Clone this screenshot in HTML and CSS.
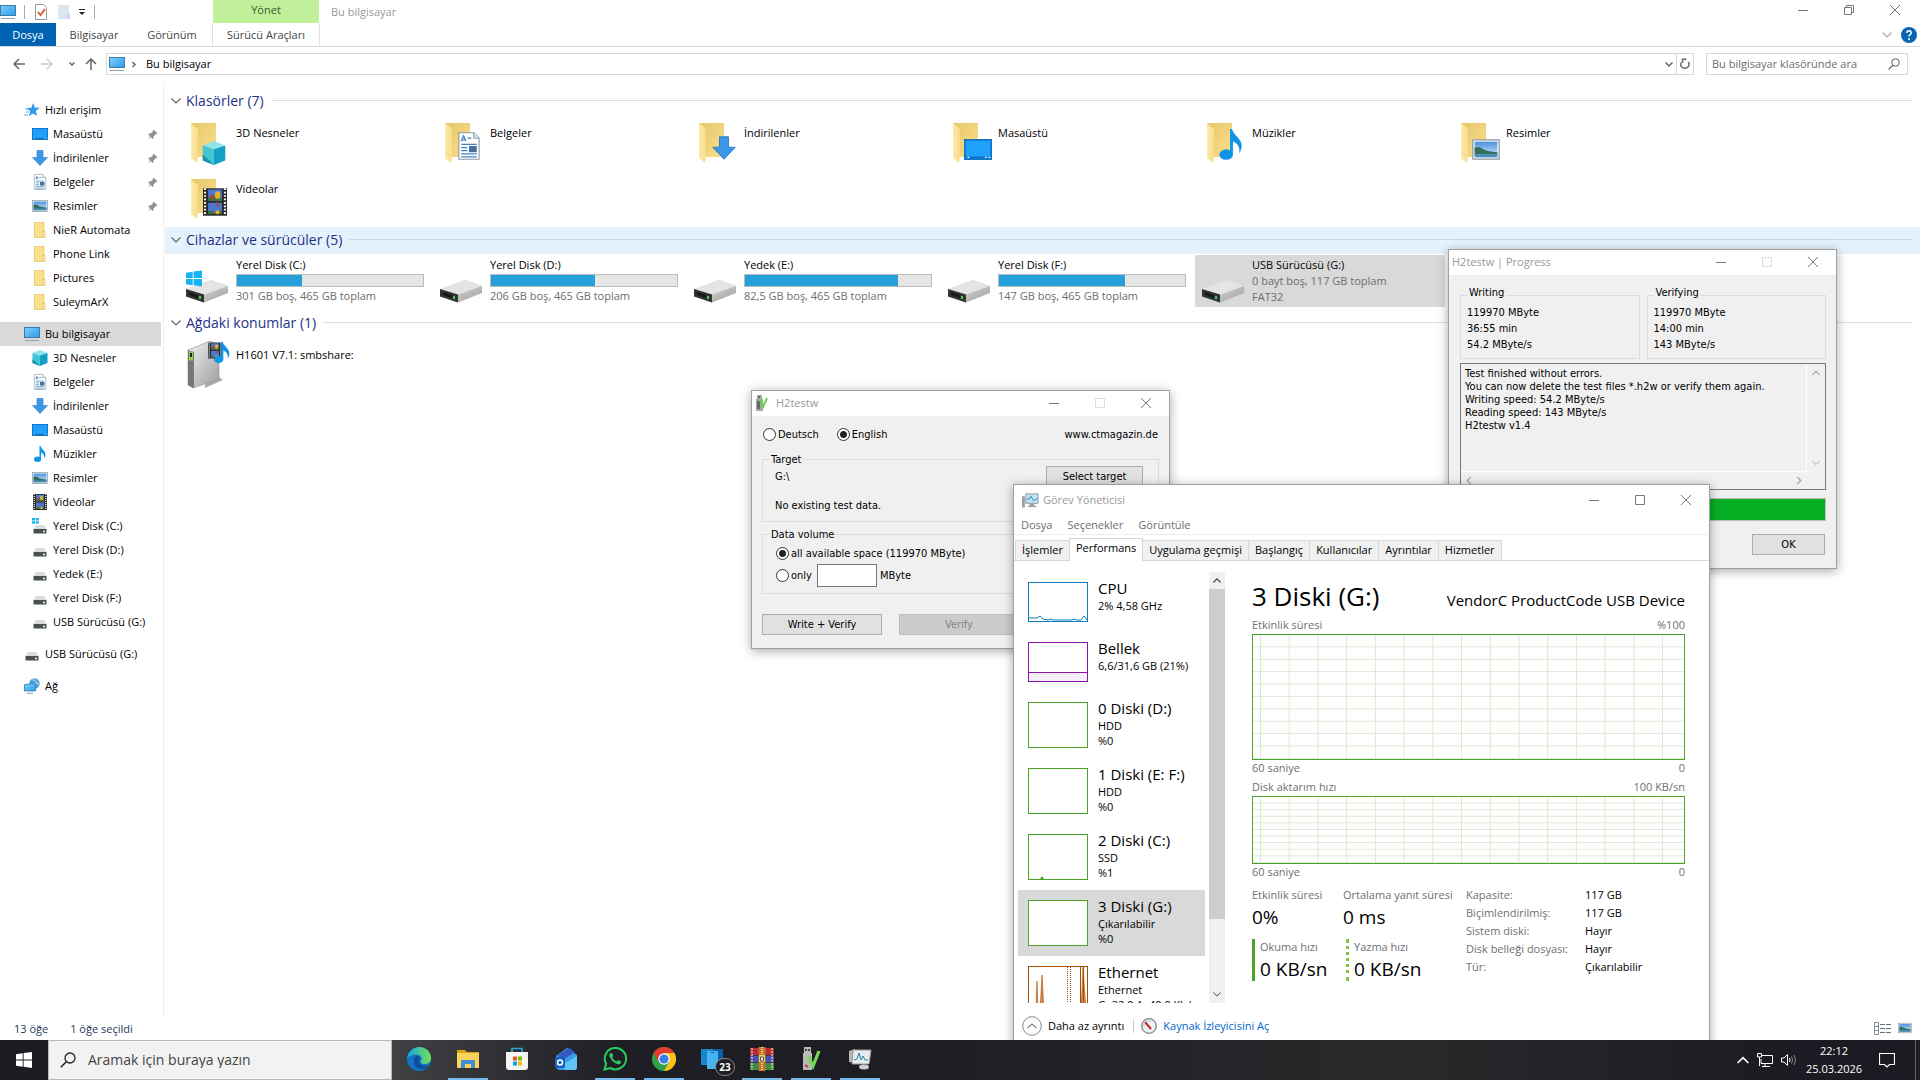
FILE: index.html
```html
<!DOCTYPE html>
<html lang="tr">

<head>
    <meta charset="UTF-8">
    <meta name="viewport" content="width=device-width, initial-scale=1.0">
    <title>Bu bilgisayar</title>
    <link rel="stylesheet" href="styles.css">
</head>

<body>
    <svg class="sprite" aria-hidden="true">
        <defs>
            <linearGradient id="gBlue" x1="0" y1="0" x2="1" y2="1">
                <stop offset="0" stop-color="#7fd0fa" />
                <stop offset="1" stop-color="#2a9ce8" />
            </linearGradient>
            <linearGradient id="gFolder" x1="0" y1="0" x2="1" y2="1">
                <stop offset="0" stop-color="#e6c66c" />
                <stop offset="1" stop-color="#fbdf8a" />
            </linearGradient>
            <linearGradient id="gFlap" x1="0" y1="0" x2="1" y2="0">
                <stop offset="0" stop-color="#fde9a9" />
                <stop offset="1" stop-color="#f8dc8c" />
            </linearGradient>
            <linearGradient id="gMetal" x1="0" y1="0" x2="1" y2="1">
                <stop offset="0" stop-color="#f2f2f2" />
                <stop offset="1" stop-color="#9c9c9c" />
            </linearGradient>
            <linearGradient id="gSky" x1="0" y1="0" x2="0" y2="1">
                <stop offset="0" stop-color="#4a90dc" />
                <stop offset="1" stop-color="#d9ecfa" />
            </linearGradient>
            <linearGradient id="gEdge" x1="0" y1="0" x2="1" y2="0">
                <stop offset="0" stop-color="#1fa6e0" />
                <stop offset="1" stop-color="#6fe05a" />
            </linearGradient>
        </defs>
        <symbol id="pc" viewBox="0 0 16 16">
            <rect x=".5" y="1.5" width="15" height="10" fill="url(#gBlue)" stroke="#3a7ca8" />
            <path d="M1 14.5h14" stroke="#8aa5b5" />
        </symbol>
        <symbol id="star" viewBox="0 0 16 16">
            <path d="M9 1l1.800 4.600 5 .2-4 3.200 1.400 5L9 11.400 4.800 14.200l1.500-5L2.400 6l5-.3z" fill="#2f9be6" />
            <path d="M1 7h4M2 10h3M0 13h4" stroke="#4cb0f0" />
        </symbol>
        <symbol id="desk" viewBox="0 0 16 12">
            <rect x=".5" y=".5" width="15" height="11" fill="#1ea0fb" stroke="#0f78c8" />
            <path d="M1 10.500h14" stroke="#0c6fc0" />
            <path d="M2 10.500h1M12 10.500h1M14 10.500h1" stroke="#fff" stroke-width=".6" />
        </symbol>
        <symbol id="down" viewBox="0 0 16 16">
            <path d="M5 .5h6v7h4.500L8 15.500.5 7.500H5z" fill="#3b96e6" stroke="#2878c8" stroke-width=".6" />
        </symbol>
        <symbol id="docs" viewBox="0 0 14 18">
            <path d="M.5.5H10l3.500 3.500v13.500H.5z" fill="#fff" stroke="#8a99a6" stroke-width=".7" />
            <path d="M10 .5V4h3.500" fill="#dbe4ea" stroke="#8a99a6" stroke-width=".6" />
            <path d="M2 6l1.500-3.500L5 6M2.500 5h2M6 4h2.500M2 8h10M2 10h4M2 12h4M2 14h10M2 16h10" fill="none" stroke="#3f86bd" stroke-width=".8" />
            <rect x="7" y="9" width="5" height="4" fill="#47709c" />
        </symbol>
        <symbol id="pics" viewBox="0 0 16 12">
            <rect x=".5" y=".5" width="15" height="11" fill="#fff" stroke="#8795a1" stroke-width=".7" />
            <rect x="1.500" y="1.500" width="13" height="9" fill="url(#gSky)" />
            <path d="M1.500 5q2.500-1 4.500.5t8.500 2V9h-13z" fill="#33705a" />
            <path d="M1.500 8.500h13v2h-13z" fill="#4e8fb8" />
        </symbol>
        <symbol id="cube" viewBox="0 0 16 16">
            <path d="M8 0l7.500 3L8 5.500.5 3z" fill="#8fe3ea" />
            <path d="M.5 3L8 5.500V16L.5 13z" fill="#45c4d6" />
            <path d="M15.500 3L8 5.500V16l7.500-3z" fill="#12a0c4" />
            <path d="M.5 9L8 16 .5 13z" fill="#1b8fa8" />
        </symbol>
        <symbol id="music" viewBox="0 0 12 16">
            <ellipse cx="3.500" cy="13.200" rx="3.500" ry="2.700" fill="#0f94ea" />
            <path d="M5.500 13V0h1c.5 3 5 5 5 8.500 0 2-.6 3-1.200 4 .4-3-.8-5-3.300-6V13z" fill="#0f94ea" />
        </symbol>
        <symbol id="video" viewBox="0 0 14 16">
            <path d="M0 0h14v16H0z" fill="#2b2b2b" />
            <path d="M1.200 0v16M12.800 0v16" stroke="#fff" stroke-width="1.200" stroke-dasharray="1 1" />
            <path d="M3 .7h8v6.600H3zM3 8.500h8V15H3z" fill="#4a78d0" />
            <path d="M3 5.500l3-1.500 5 2v1.300H3zM3 13l4 1 4-1v2H3z" fill="#3f7040" />
            <ellipse cx="8.500" cy="4" rx="1.600" ry="2.200" fill="#e8b020" />
            <ellipse cx="5" cy="5" rx="1" ry="1.200" fill="#c0392b" />
            <path d="M8.500 8v3" stroke="#c0392b" />
            <circle cx="8.500" cy="14" r="1.200" fill="#e8b020" />
        </symbol>
        <symbol id="folderSm" viewBox="0 0 16 16">
            <path d="M2.500.5h9.500v15H2.500z" fill="#fbe08a" stroke="#e6bf58" stroke-width=".7" />
            <path d="M10.500 9.500H13v6h-2.500z" fill="#fbe9ad" stroke="#e0b44a" stroke-width=".6" />
        </symbol>
        <symbol id="driveSm" viewBox="0 0 16 16">
            <path d="M4 6h8l2.500 4h-13z" fill="#d9dcdd" />
            <path d="M1.500 10h13v4.500h-13z" fill="#4a4f50" />
            <path d="M11 12.500h2" stroke="#e8f6e8" stroke-width="1.500" />
        </symbol>
        <symbol id="driveWinSm" viewBox="0 0 16 16">
            <use href="#driveSm" y="1" width="16" height="16" />
            <path d="M0 0h3v2.500H0zM3.700 0h3v2.500h-3zM0 3.300h3v2.500H0zM3.700 3.300h3v2.500h-3z" fill="#18b4ea" />
        </symbol>
        <symbol id="net" viewBox="0 0 16 16">
            <circle cx="10.500" cy="5.500" r="5.200" fill="#4c9ed8" />
            <path d="M8 2q3-1 4 2t3 1M8 7q3-3 7-1" stroke="#b5dcf4" fill="none" />
            <path d="M.5 6.500l11-1v7.500l-11 0z" fill="url(#gBlue)" stroke="#2f7fb5" stroke-width=".8" />
            <path d="M3 15.300h6" stroke="#7fa4bb" />
        </symbol>
        <symbol id="pin" viewBox="0 0 12 12">
            <path d="M7 .5L11.500 5l-1 .8-1 0L7 8.500l0 2-1 .5L1.500 6l.5-1h2l2.400-2.500 0-1zM3.500 7.500l1 1L.8 11.500z" fill="#8b949b" />
        </symbol>
        <symbol id="folder" viewBox="0 0 48 48">
            <path d="M6 4h25v34H12z" fill="url(#gFolder)" />
            <path d="M6 4l7 6v27l-1 7-6-5z" fill="url(#gFlap)" />
        </symbol>
        <symbol id="drive" viewBox="0 0 48 48">
            <path d="M1 32l25-9 17 6v7L19 45.500 1 39z" fill="url(#gMetal)" />
            <path d="M1 32l25-9 17 6-24 8.500z" fill="#e4e4e6" />
            <path d="M1 32l18 5.500v8L1 39.500z" fill="#2f3433" />
            <path d="M4 35l9 3v3l-9-3z" fill="#151a18" />
            <path d="M15 39v3" stroke="#58c060" stroke-width="2" />
        </symbol>
        <symbol id="winlogo" viewBox="0 0 16 16">
            <path d="M0 2.200L6.700 1.200v6.400H0zM7.600 1.100L16 0v7.600H7.600zM0 8.400h6.700v6.400L0 13.800zM7.600 8.400H16V16l-8.400-1.200z" fill="currentColor" />
        </symbol>
        <symbol id="server" viewBox="0 0 48 48">
            <path d="M20 43l14-7 4 3-18 8z" fill="#aaa" />
            <path d="M3 9l22-9 9 4v34L8 47l-5-3z" fill="url(#gMetal)" stroke="#8f8f8f" stroke-width=".6" />
            <path d="M3 9l6 2v36l-6-3z" fill="#777" />
            <path d="M4 10l4 1v9l-4-1z" fill="#8ed04a" />
            <path d="M5 12h2v4H5z" fill="#222" />
            <use href="#video" x="23" y="1" width="14" height="17" />
            <use href="#music" x="29" y="0" width="16" height="23" />
        </symbol>
        <symbol id="search" viewBox="0 0 16 16">
            <circle cx="10" cy="6" r="5" fill="none" stroke="currentColor" stroke-width="1.300" />
            <path d="M6.300 9.700L.8 15.200" stroke="currentColor" stroke-width="1.500" />
        </symbol>
        <symbol id="min" viewBox="0 0 10 10">
            <path d="M0 5.500h10" stroke="currentColor" />
        </symbol>
        <symbol id="max" viewBox="0 0 10 10">
            <path d="M.5.5h9v9h-9z" fill="none" stroke="currentColor" />
        </symbol>
        <symbol id="restore" viewBox="0 0 10 10">
            <path d="M.5 2.500h7v7h-7zM2.500 2V.5h7v7H8" fill="none" stroke="currentColor" />
        </symbol>
        <symbol id="close" viewBox="0 0 10 10">
            <path d="M0 0l10 10M10 0L0 10" stroke="currentColor" />
        </symbol>
        <symbol id="chev" viewBox="0 0 10 6">
            <path d="M.5.5L5 5 9.500.5" fill="none" stroke="currentColor" stroke-width="1.200" />
        </symbol>
        <symbol id="chevUp" viewBox="0 0 10 6">
            <path d="M.5 5.500L5 1l4.500 4.500" fill="none" stroke="currentColor" stroke-width="1.400" />
        </symbol>
        <symbol id="h2" viewBox="0 0 16 16">
            <path d="M2 0h5v4H2zM1 4h7v12H1z" fill="#a6a6a6" />
            <path d="M3 1h2v2H3zM2 6h3v8H2z" fill="#666" />
            <path d="M5 5l3 7 4-9" fill="none" stroke="#69cf52" stroke-width="2" />
        </symbol>
        <symbol id="tm" viewBox="0 0 18 16">
            <path d="M0 4h3v12H0z" fill="#98a0a5" />
            <path d="M4 1.500h13v10H4z" fill="#bfe4f7" stroke="#8b969d" />
            <path d="M5 7l2.500 0 2-3 3 5 2-2h2" fill="none" stroke="#2a7fae" />
            <path d="M8 12h5v2H8zM6 14h9v1.500H6z" fill="#9aa2a6" />
        </symbol>
    </svg>

    <main class="desktop">
        <section class="explorer">
            <header class="explorer-top">
                <div class="quick-access">
                    <svg class="i16"><use href="#pc" /></svg>
                    <span class="sep"></span>
                    <svg class="i16" viewBox="0 0 16 16">
                        <path d="M2.500.5h8l3 3v12h-11z" fill="#fff" stroke="#999" />
                        <path d="M5 8l2.500 3L12 5" fill="none" stroke="#e0562c" stroke-width="1.800" />
                    </svg>
                    <svg class="i16" viewBox="0 0 16 16">
                        <path d="M1 1h11v14H1z" fill="#dbe6f5" />
                        <path d="M10 9h3v6h-3z" fill="#c8d8ee" />
                    </svg>
                    <svg class="caret" viewBox="0 0 8 8">
                        <path d="M1 1.500h6" stroke="#222" />
                        <path d="M1 4h6L4 7z" fill="#222" />
                    </svg>
                    <span class="sep"></span>
                </div>
                <div class="context-label">Yönet</div>
                <h1 class="window-name">Bu bilgisayar</h1>
                <div class="win-buttons">
                    <button aria-label="Simge durumuna küçült"><svg><use href="#min" /></svg></button>
                    <button aria-label="Önceki boyut"><svg><use href="#restore" /></svg></button>
                    <button aria-label="Kapat"><svg><use href="#close" /></svg></button>
                </div>
            </header>
            <nav class="ribbon">
                <button class="file-tab">Dosya</button>
                <button class="tab-a">Bilgisayar</button>
                <button class="tab-b">Görünüm</button>
                <button class="context-tab">Sürücü Araçları</button>
                <div class="ribbon-end">
                    <svg class="chev pale"><use href="#chev" /></svg>
                    <svg class="i16" viewBox="0 0 16 16">
                        <circle cx="8" cy="8" r="8" fill="#0a64b4" />
                        <path d="M5.800 6q0-2.300 2.200-2.300T10.200 6Q10.200 7 9 7.700T8 9.500" fill="none" stroke="#fff" stroke-width="1.500" />
                        <circle cx="8" cy="12" r="1" fill="#fff" />
                    </svg>
                </div>
            </nav>
            <div class="address-row">
                <div class="history">
                    <svg class="arrow" viewBox="0 0 12 12"><path d="M12 6H1M6 1L1 6l5 5" /></svg>
                    <svg class="arrow off" viewBox="0 0 12 12"><path d="M0 6h11M6 1l5 5-5 5" /></svg>
                    <svg class="tiny" viewBox="0 0 6 4"><path d="M.5.5L3 3 5.500.5" /></svg>
                    <svg class="arrow" viewBox="0 0 12 12"><path d="M6 12V1M1 6l5-5 5 5" /></svg>
                </div>
                <div class="address">
                    <svg class="i16"><use href="#pc" /></svg>
                    <svg class="crumb" viewBox="0 0 4 6"><path d="M.5.5L3 3 .5 5.500" /></svg>
                    <span>Bu bilgisayar</span>
                    <svg class="drop" viewBox="0 0 8 5"><path d="M.5.5L4 4 7.500.5" /></svg>
                    <button class="refresh" aria-label="Yenile">
                        <svg viewBox="0 0 12 12"><path d="M2 4.500A4.200 4.200 0 1 0 9.500 4M7.500 1.200H3.500V5" /></svg>
                    </button>
                </div>
                <div class="search">
                    <input type="text" aria-label="Ara" placeholder="Bu bilgisayar klasöründe ara">
                    <svg><use href="#search" /></svg>
                </div>
            </div>
            <div class="explorer-body">
                <aside class="tree">
                    <ul>
                        <li><svg><use href="#star" /></svg>Hızlı erişim</li>
                        <li class="sub"><svg><use href="#desk" /></svg>Masaüstü<svg class="pin"><use href="#pin" /></svg></li>
                        <li class="sub"><svg><use href="#down" /></svg>İndirilenler<svg class="pin"><use href="#pin" /></svg></li>
                        <li class="sub"><svg><use href="#docs" /></svg>Belgeler<svg class="pin"><use href="#pin" /></svg></li>
                        <li class="sub"><svg><use href="#pics" /></svg>Resimler<svg class="pin"><use href="#pin" /></svg></li>
                        <li class="sub"><svg><use href="#folderSm" /></svg>NieR Automata</li>
                        <li class="sub"><svg><use href="#folderSm" /></svg>Phone Link</li>
                        <li class="sub"><svg><use href="#folderSm" /></svg>Pictures</li>
                        <li class="sub"><svg><use href="#folderSm" /></svg>SuleymArX</li>
                    </ul>
                    <ul>
                        <li class="selected"><svg><use href="#pc" /></svg>Bu bilgisayar</li>
                        <li class="sub"><svg><use href="#cube" /></svg>3D Nesneler</li>
                        <li class="sub"><svg><use href="#docs" /></svg>Belgeler</li>
                        <li class="sub"><svg><use href="#down" /></svg>İndirilenler</li>
                        <li class="sub"><svg><use href="#desk" /></svg>Masaüstü</li>
                        <li class="sub"><svg><use href="#music" /></svg>Müzikler</li>
                        <li class="sub"><svg><use href="#pics" /></svg>Resimler</li>
                        <li class="sub"><svg><use href="#video" /></svg>Videolar</li>
                        <li class="sub"><svg><use href="#driveWinSm" /></svg>Yerel Disk (C:)</li>
                        <li class="sub"><svg><use href="#driveSm" /></svg>Yerel Disk (D:)</li>
                        <li class="sub"><svg><use href="#driveSm" /></svg>Yedek (E:)</li>
                        <li class="sub"><svg><use href="#driveSm" /></svg>Yerel Disk (F:)</li>
                        <li class="sub"><svg><use href="#driveSm" /></svg>USB Sürücüsü (G:)</li>
                    </ul>
                    <ul>
                        <li><svg><use href="#driveSm" /></svg>USB Sürücüsü (G:)</li>
                    </ul>
                    <ul>
                        <li><svg><use href="#net" /></svg>Ağ</li>
                    </ul>
                </aside>
                <div class="files">
                    <h2 class="group"><svg class="chev"><use href="#chev" /></svg>Klasörler (7)</h2>
                    <div class="tiles">
                        <div class="tile folder">
                            <svg viewBox="0 0 48 48"><use href="#folder" width="48" height="48" /><use href="#cube" x="17" y="22" width="24" height="24" /></svg>
                            <p>3D Nesneler</p>
                        </div>
                        <div class="tile folder">
                            <svg viewBox="0 0 48 48"><use href="#folder" width="48" height="48" /><use href="#docs" x="19" y="13" width="22" height="28" /></svg>
                            <p>Belgeler</p>
                        </div>
                        <div class="tile folder">
                            <svg viewBox="0 0 48 48"><use href="#folder" width="48" height="48" /><use href="#down" x="19" y="17" width="24" height="24" /></svg>
                            <p>İndirilenler</p>
                        </div>
                        <div class="tile folder">
                            <svg viewBox="0 0 48 48"><use href="#folder" width="48" height="48" /><use href="#desk" x="17" y="20" width="28" height="21" /></svg>
                            <p>Masaüstü</p>
                        </div>
                        <div class="tile folder">
                            <svg viewBox="0 0 48 48"><use href="#folder" width="48" height="48" /><use href="#music" x="18" y="10" width="24" height="31" /></svg>
                            <p>Müzikler</p>
                        </div>
                        <div class="tile folder">
                            <svg viewBox="0 0 48 48"><use href="#folder" width="48" height="48" /><use href="#pics" x="17" y="20" width="28" height="21" /></svg>
                            <p>Resimler</p>
                        </div>
                        <div class="tile folder">
                            <svg viewBox="0 0 48 48"><use href="#folder" width="48" height="48" /><use href="#video" x="18" y="13" width="24" height="28" /></svg>
                            <p>Videolar</p>
                        </div>
                    </div>
                    <h2 class="group hover"><svg class="chev"><use href="#chev" /></svg>Cihazlar ve sürücüler (5)</h2>
                    <div class="tiles drives">
                        <div class="tile">
                            <svg class="cyan" viewBox="0 0 48 48"><use href="#drive" width="48" height="48" /><use href="#winlogo" x="1" y="13" width="16" height="17" /></svg>
                            <div class="info">
                                <p>Yerel Disk (C:)</p>
                                <div class="usage"><div style="width: 35%"></div></div>
                                <p class="free">301 GB boş, 465 GB toplam</p>
                            </div>
                        </div>
                        <div class="tile">
                            <svg viewBox="0 0 48 48"><use href="#drive" width="48" height="48" /></svg>
                            <div class="info">
                                <p>Yerel Disk (D:)</p>
                                <div class="usage"><div style="width: 56%"></div></div>
                                <p class="free">206 GB boş, 465 GB toplam</p>
                            </div>
                        </div>
                        <div class="tile">
                            <svg viewBox="0 0 48 48"><use href="#drive" width="48" height="48" /></svg>
                            <div class="info">
                                <p>Yedek (E:)</p>
                                <div class="usage"><div style="width: 82%"></div></div>
                                <p class="free">82,5 GB boş, 465 GB toplam</p>
                            </div>
                        </div>
                        <div class="tile">
                            <svg viewBox="0 0 48 48"><use href="#drive" width="48" height="48" /></svg>
                            <div class="info">
                                <p>Yerel Disk (F:)</p>
                                <div class="usage"><div style="width: 68%"></div></div>
                                <p class="free">147 GB boş, 465 GB toplam</p>
                            </div>
                        </div>
                        <div class="tile selected">
                            <svg viewBox="0 0 48 48"><use href="#drive" width="48" height="48" /></svg>
                            <div class="info">
                                <p>USB Sürücüsü (G:)</p>
                                <p class="free">0 bayt boş, 117 GB toplam</p>
                                <p class="free">FAT32</p>
                            </div>
                        </div>
                    </div>
                    <h2 class="group"><svg class="chev"><use href="#chev" /></svg>Ağdaki konumlar (1)</h2>
                    <div class="tiles">
                        <div class="tile folder">
                            <svg viewBox="0 0 48 48"><use href="#server" width="48" height="48" /></svg>
                            <p>H1601 V7.1: smbshare:</p>
                        </div>
                    </div>
                </div>
            </div>
            <footer class="status">
                <span>13 öğe</span>
                <span>1 öğe seçildi</span>
                <div class="views">
                    <svg class="details" viewBox="0 0 18 13">
                        <path d="M.5.5h4v12h-4zM.5 4.500h4M.5 8.500h4" fill="none" stroke="#8b8b8b" />
                        <path d="M6 2.500h5M12 2.500h5M6 6.500h5M12 6.500h5M6 10.500h5M12 10.500h5" stroke="#5c7186" />
                    </svg>
                    <svg class="large"><use href="#pics" /></svg>
                </div>
            </footer>
        </section>

        <section class="window h2testw">
            <header class="titlebar">
                <svg class="i16"><use href="#h2" /></svg>
                <h2>H2testw</h2>
                <div class="win-buttons">
                    <button aria-label="Minimize"><svg><use href="#min" /></svg></button>
                    <button aria-label="Maximize" disabled><svg><use href="#max" /></svg></button>
                    <button aria-label="Close"><svg><use href="#close" /></svg></button>
                </div>
            </header>
            <form class="dialog">
                <div class="language">
                    <label><input type="radio" name="lang">Deutsch</label>
                    <label><input type="radio" name="lang" checked>English</label>
                    <span>www.ctmagazin.de</span>
                </div>
                <fieldset class="target">
                    <legend>Target</legend>
                    <div class="target-row"><span>G:\</span><button type="button">Select target</button></div>
                    <p>No existing test data.</p>
                </fieldset>
                <fieldset class="volume">
                    <legend>Data volume</legend>
                    <label><input type="radio" name="volume" checked>all available space (119970 MByte)</label>
                    <div class="only">
                        <label><input type="radio" name="volume">only</label>
                        <input type="text" id="mbyte"><label for="mbyte">MByte</label>
                    </div>
                </fieldset>
                <div class="actions">
                    <button type="button">Write + Verify</button>
                    <button type="button" disabled>Verify</button>
                </div>
            </form>
        </section>

        <section class="window progress">
            <header class="titlebar">
                <h2>H2testw | Progress</h2>
                <div class="win-buttons">
                    <button aria-label="Minimize"><svg><use href="#min" /></svg></button>
                    <button aria-label="Maximize" disabled><svg><use href="#max" /></svg></button>
                    <button aria-label="Close"><svg><use href="#close" /></svg></button>
                </div>
            </header>
            <div class="dialog">
                <div class="results">
                    <fieldset>
                        <legend>Writing</legend>
                        <p>119970 MByte</p>
                        <p>36:55 min</p>
                        <p>54.2 MByte/s</p>
                    </fieldset>
                    <fieldset>
                        <legend>Verifying</legend>
                        <p>119970 MByte</p>
                        <p>14:00 min</p>
                        <p>143 MByte/s</p>
                    </fieldset>
                </div>
                <div class="log">
                    <div class="log-text">
                        <p>Test finished without errors.</p>
                        <p>You can now delete the test files *.h2w or verify them again.</p>
                        <p>Writing speed: 54.2 MByte/s</p>
                        <p>Reading speed: 143 MByte/s</p>
                        <p>H2testw v1.4</p>
                    </div>
                    <div class="log-v">
                        <svg><use href="#chevUp" /></svg>
                        <svg><use href="#chev" /></svg>
                    </div>
                    <div class="log-h">
                        <svg viewBox="0 0 6 10"><path d="M5 1L1 5l4 4" /></svg>
                        <svg viewBox="0 0 6 10"><path d="M1 1l4 4-4 4" /></svg>
                    </div>
                </div>
                <div class="bar"></div>
                <button type="button">OK</button>
            </div>
        </section>

        <section class="window taskmgr">
            <header class="titlebar">
                <svg class="tm-icon"><use href="#tm" /></svg>
                <h2>Görev Yöneticisi</h2>
                <div class="win-buttons">
                    <button aria-label="Simge durumuna küçült"><svg><use href="#min" /></svg></button>
                    <button aria-label="Ekranı kapla"><svg><use href="#max" /></svg></button>
                    <button aria-label="Kapat"><svg><use href="#close" /></svg></button>
                </div>
            </header>
            <nav class="menu">
                <button>Dosya</button>
                <button>Seçenekler</button>
                <button>Görüntüle</button>
            </nav>
            <nav class="tabs">
                <button>İşlemler</button>
                <button class="active">Performans</button>
                <button>Uygulama geçmişi</button>
                <button>Başlangıç</button>
                <button>Kullanıcılar</button>
                <button>Ayrıntılar</button>
                <button>Hizmetler</button>
            </nav>
            <div class="perf">
                <ul class="devices">
                    <li>
                        <svg class="thumb cpu" viewBox="0 0 58 38"><path d="M0 35l8 0 3-2 3 3 5 1 3-1 2 1h18l3-1 3 1h4l3-4 3 4" /></svg>
                        <div><h3>CPU</h3><p>2% 4,58 GHz</p></div>
                    </li>
                    <li>
                        <svg class="thumb mem" viewBox="0 0 58 38"><path d="M-1 29.500h60v9h-60z" /></svg>
                        <div><h3>Bellek</h3><p>6,6/31,6 GB (21%)</p></div>
                    </li>
                    <li class="disk">
                        <svg class="thumb"></svg>
                        <div><h3>0 Diski (D:)</h3><p>HDD</p><p>%0</p></div>
                    </li>
                    <li class="disk">
                        <svg class="thumb"></svg>
                        <div><h3>1 Diski (E: F:)</h3><p>HDD</p><p>%0</p></div>
                    </li>
                    <li class="disk">
                        <svg class="thumb" viewBox="0 0 58 44"><path d="M11 44l2-3 2 3z" fill="#4ca32a" /></svg>
                        <div><h3>2 Diski (C:)</h3><p>SSD</p><p>%1</p></div>
                    </li>
                    <li class="disk selected">
                        <svg class="thumb"></svg>
                        <div><h3>3 Diski (G:)</h3><p>Çıkarılabilir</p><p>%0</p></div>
                    </li>
                    <li class="disk">
                        <svg class="thumb eth" viewBox="0 0 58 44">
                            <path d="M7 44l1-30 1 30zM11 44l2-36 2 36zM52 44l2-44 3 44z" fill="#d98a58" stroke-width=".6" />
                            <path d="M51.500 0v44M54.500 0v44" />
                            <path d="M38.500 0v44M41.500 0v44" stroke-dasharray="1 1" />
                        </svg>
                        <div><h3>Ethernet</h3><p>Ethernet</p><p>G: 32,0 A: 40,0 Kb/sn</p></div>
                    </li>
                </ul>
                <div class="scroll">
                    <svg><use href="#chevUp" /></svg>
                    <div class="scroll-thumb"></div>
                    <svg><use href="#chev" /></svg>
                </div>
                <div class="detail">
                    <div class="detail-head">
                        <h2>3 Diski (G:)</h2>
                        <span>VendorC ProductCode USB Device</span>
                    </div>
                    <div class="caption"><span>Etkinlik süresi</span><span>%100</span></div>
                    <div class="chart tall"></div>
                    <div class="caption"><span>60 saniye</span><span>0</span></div>
                    <div class="caption second"><span>Disk aktarım hızı</span><span>100 KB/sn</span></div>
                    <div class="chart"></div>
                    <div class="caption"><span>60 saniye</span><span>0</span></div>
                    <div class="stats">
                        <div class="numbers">
                            <div><p>Etkinlik süresi</p><strong>0%</strong></div>
                            <div><p>Ortalama yanıt süresi</p><strong>0 ms</strong></div>
                            <div class="read"><p>Okuma hızı</p><strong>0 KB/sn</strong></div>
                            <div class="write"><p>Yazma hızı</p><strong>0 KB/sn</strong></div>
                        </div>
                        <table>
                            <tr><th>Kapasite:</th><td>117 GB</td></tr>
                            <tr><th>Biçimlendirilmiş:</th><td>117 GB</td></tr>
                            <tr><th>Sistem diski:</th><td>Hayır</td></tr>
                            <tr><th>Disk belleği dosyası:</th><td>Hayır</td></tr>
                            <tr><th>Tür:</th><td>Çıkarılabilir</td></tr>
                        </table>
                    </div>
                </div>
            </div>
            <footer class="tm-footer">
                <button>
                    <svg class="less" viewBox="0 0 20 20">
                        <circle cx="10" cy="10" r="9.300" fill="none" stroke="#888" />
                        <path d="M5.500 12L10 8l4.500 4" fill="none" stroke="#888" stroke-width="1.300" />
                    </svg>Daha az ayrıntı
                </button>
                <span class="sep"></span>
                <svg class="i16" viewBox="0 0 16 16">
                    <circle cx="8" cy="8" r="7.300" fill="#eef2f4" stroke="#7d868c" stroke-width="1.300" />
                    <path d="M4 4l6 7" stroke="#d02424" stroke-width="2" />
                    <path d="M3 9a5 5 0 0 1 9-4" fill="none" stroke="#9aa" stroke-dasharray="1 1" />
                </svg>
                <a href="#">Kaynak İzleyicisini Aç</a>
            </footer>
        </section>
    </main>

    <footer class="taskbar">
        <button class="start" aria-label="Başlat"><svg class="i16"><use href="#winlogo" /></svg></button>
        <label class="task-search">
            <svg><use href="#search" /></svg>
            <input type="text" aria-label="Ara" placeholder="Aramak için buraya yazın">
        </label>
        <div class="apps">
            <button aria-label="Edge">
                <svg viewBox="0 0 24 24">
                    <circle cx="12" cy="12" r="12" fill="#1272c4" />
                    <path d="M.5 10C2 4 7 0 12.500 0 19 0 24 5 24 11c0 4-3 6-6.500 6-3 0-4.500-1.500-3.500-3 2-3-.5-6.500-4.500-6.500C5 7.500 1.500 9 .5 12z" fill="url(#gEdge)" />
                    <path d="M9 9c-4 3-3 11 4 13 4 .8 7-1 9-4-4 2-9 1-10-3-.6-2 0-3 .8-4C12 9.500 10.500 8.500 9 9z" fill="#0d4f9e" />
                </svg>
            </button>
            <button class="open" aria-label="Dosya Gezgini">
                <svg viewBox="0 0 24 24">
                    <path d="M1 3h8l2 2h12v6H1z" fill="#e2a512" />
                    <path d="M1 6h22v15H1z" fill="#fbd35c" />
                    <path d="M5 21v-7q0-1 1-1h12q1 0 1 1v7h-4v-4H9v4z" fill="#3c8fd4" />
                </svg>
            </button>
            <button aria-label="Microsoft Store">
                <svg viewBox="0 0 24 24">
                    <path d="M7 5V1.500h10V5" fill="none" stroke="#2fa2dc" stroke-width="1.700" />
                    <path d="M1 5h22v15q0 3-3 3H4q-3 0-3-3z" fill="#f4f4f4" />
                    <path d="M8 9.500h4v4H8z" fill="#f25022" />
                    <path d="M13 9.500h4v4h-4z" fill="#7fba00" />
                    <path d="M8 14.500h4v4H8z" fill="#00a4ef" />
                    <path d="M13 14.500h4v4h-4z" fill="#ffb900" />
                </svg>
            </button>
            <button aria-label="Outlook">
                <svg viewBox="0 0 24 24">
                    <path d="M2 9L13 1l10 7v12q0 3-3 3H6q-4 0-4-4z" fill="#3b9be8" />
                    <path d="M4 8l11-7 6 4L6 15z" fill="#3457c4" />
                    <path d="M23 9L8 18l3 5h9q3 0 3-3z" fill="#63c4f5" />
                    <rect x="1" y="10" width="10" height="11" rx="2" fill="#1263bd" />
                    <circle cx="6" cy="15.500" r="2.500" fill="none" stroke="#fff" stroke-width="1.500" />
                </svg>
            </button>
            <button class="open" aria-label="WhatsApp">
                <svg viewBox="0 0 24 24">
                    <path d="M1.500 22.500l1.600-5.700A10.700 10.700 0 1 1 7.300 21z" fill="none" stroke="#28c95f" stroke-width="2" />
                    <path d="M8 6c-1.600 0-2.200 2.500-1 4.500 2 4 5.500 6.500 8.500 6.800 2 0 3-2 2.600-2.800l-3-1.600-1.400 1.700c-2-.7-3.500-2-4.500-4l1.100-1.500L9 6z" fill="#28c95f" />
                </svg>
            </button>
            <button class="open" aria-label="Chrome">
                <svg viewBox="0 0 24 24">
                    <circle cx="12" cy="12" r="12" fill="#2da14c" />
                    <path d="M1.600 6A12 12 0 0 1 22.400 6L12 6 6.800 15z" fill="#e33b2e" />
                    <path d="M22.400 6A12 12 0 0 1 12 24l5.200-9L12 6z" fill="#fbc116" />
                    <circle cx="12" cy="12" r="5.800" fill="#fff" />
                    <circle cx="12" cy="12" r="4.600" fill="#3b7ded" />
                </svg>
            </button>
            <button aria-label="Telefon Bağlantısı">
                <svg viewBox="0 0 24 24">
                    <path d="M0 2h14v16H0z" fill="#1686cf" />
                    <path d="M12 2h10v18H12z" fill="#0b5ea8" />
                    <path d="M6 4h11v18H6z" fill="#46b4ee" />
                    <path d="M10 5.500h3" stroke="#0b5ea8" />
                </svg>
                <span class="badge">23</span>
            </button>
            <button class="open" aria-label="WinRAR">
                <svg viewBox="0 0 24 24">
                    <path d="M0 1h24v7H0z" fill="#b82c3a" />
                    <path d="M0 8.500h24v7H0z" fill="#4a4fb4" />
                    <path d="M0 16h24v7H0z" fill="#3c8c46" />
                    <path d="M2 1v22M22 1v22" stroke="#d9c48a" stroke-width="1.500" stroke-dasharray="2 1" />
                    <path d="M8.500 0h7v24h-7z" fill="#c0742c" />
                    <path d="M9 8h6v7H9z" fill="#f1d04c" />
                    <path d="M10.500 10h3v4h-3z" fill="#eee" stroke="#555" />
                    <path d="M12 0v7M12 16v8" stroke="#f5d98a" stroke-width="2" stroke-dasharray="1 1" />
                </svg>
            </button>
            <button class="open" aria-label="H2testw">
                <svg viewBox="0 0 24 24">
                    <path d="M5 0h7v6H5zM4 6h9v17H4z" fill="#b9b9b9" />
                    <path d="M6 2h2v2H6zM9 2h2v2H9z" fill="#444" />
                    <path d="M6 18l3 2" stroke="#b33" stroke-width="2" />
                    <path d="M9 9l5 10L20 4" fill="none" stroke="#74d957" stroke-width="3.200" />
                </svg>
            </button>
            <button class="open" aria-label="Görev Yöneticisi">
                <svg viewBox="0 0 24 24">
                    <path d="M1 4l6-2v14l-6-1z" fill="#b5b5b5" />
                    <path d="M5 3h18l-2 14H4z" fill="#e8ebec" stroke="#9a9a9a" />
                    <path d="M6 13l3-1 2-6 2 7 2-4 2 4h3" fill="none" stroke="#2b7fb8" />
                    <ellipse cx="16" cy="20" rx="5" ry="2.500" fill="#cfcfcf" />
                </svg>
            </button>
        </div>
        <div class="tray">
            <svg class="tray-up"><use href="#chevUp" /></svg>
            <svg class="i16" viewBox="0 0 16 16">
                <path d="M5 3.500h10.500v8H4V7M8 12v2.500M5 14.500h8M.5 1.500h4v3.500h-4zM2.500 5v9" fill="none" stroke="#fff" />
            </svg>
            <svg class="i16" viewBox="0 0 16 16">
                <path d="M.5 6h2.500l3.500-3.500v11L3 10H.5z" fill="none" stroke="#fff" />
                <path d="M8.500 6q1.200 2 0 4" fill="none" stroke="#fff" />
                <path d="M10.500 4.500q2.300 3.500 0 7M12.800 3q3.200 5 0 10" fill="none" stroke="#888" />
            </svg>
            <div class="clock">
                <p>22:12</p>
                <p>25.03.2026</p>
            </div>
            <svg class="i16" viewBox="0 0 16 16">
                <path d="M.5 1.500h15v11h-5L8 15l-2.500-2.500h-5z" fill="none" stroke="#fff" stroke-width="1.200" />
            </svg>
            <span class="show-desktop"></span>
        </div>
    </footer>
</body>

</html>
```

FILE: styles.css
```css
* {
    box-sizing: border-box;
}

body {
    margin: 0;
    height: 100vh;
    display: flex;
    flex-direction: column;
    font-family: "Open Sans", "Noto Sans", sans-serif;
    font-size: 11px;
    line-height: 16px;
    color: #000;
    background-color: #fff;
    overflow: hidden;
}

h1,
h2,
h3,
p,
ul {
    margin: 0;
    padding: 0;
    font-weight: normal;
    font-size: inherit;
}

ul {
    list-style: none;
}

svg {
    flex: none;
}

button {
    margin: 0;
    padding: 0;
    border: none;
    background: none;
    font: inherit;
    color: inherit;
}

input {
    font: inherit;
    min-width: 0;
}

.sprite {
    position: absolute;
    width: 0;
    height: 0;
}

.i16 {
    width: 16px;
    height: 16px;
}

.chev {
    width: 10px;
    height: 6px;
    color: #666;
}

.pale {
    color: #aaa;
}

.sep {
    width: 1px;
    height: 14px;
    background-color: #aaa;
}

.desktop {
    position: relative;
    flex: 1;
    min-height: 0;
    display: flex;
    overflow: hidden;
}

/* Explorer */

.explorer {
    flex: 1;
    min-width: 0;
    display: flex;
    flex-direction: column;
}

.explorer-top {
    display: flex;
    height: 23px;
    padding-right: 2px;
}

.quick-access {
    width: 213px;
    display: flex;
    align-items: center;
    gap: 8px;
}

.caret {
    width: 8px;
    height: 8px;
    margin-left: -3px;
}

.context-label {
    width: 106px;
    padding-top: 2px;
    text-align: center;
    background-color: #c0f09a;
    color: #3a5a2a;
}

.window-name {
    flex: 1;
    padding: 4px 12px;
    color: #999;
}

.win-buttons {
    display: flex;
}

.win-buttons button {
    width: 46px;
    display: flex;
    align-items: center;
    justify-content: center;
    color: #777;
}

.win-buttons button:disabled {
    color: #ddd;
}

.win-buttons svg {
    width: 10px;
    height: 10px;
}

.explorer-top .win-buttons button {
    height: 20px;
}

.ribbon {
    display: flex;
    height: 24px;
    border-bottom: 1px solid #dadbdc;
    color: #444;
}

.file-tab {
    width: 56px;
    background-color: #0063b1;
    color: #fff;
}

.tab-a {
    width: 76px;
}

.tab-b {
    width: 80px;
}

.context-tab {
    width: 108px;
    border-left: 1px solid #e2e2e2;
    border-right: 1px solid #e2e2e2;
}

.ribbon-end {
    margin-left: auto;
    display: flex;
    align-items: center;
    gap: 9px;
    padding-right: 3px;
}

.address-row {
    display: flex;
    padding: 6px 12px 0 0;
}

.history {
    width: 106px;
    display: flex;
    align-items: center;
    gap: 16px;
    padding-left: 13px;
}

.history svg,
.address > svg path,
.refresh path {
    fill: none;
    stroke: #666;
    stroke-width: 1.5;
}

.arrow {
    width: 12px;
    height: 12px;
}

.history .off {
    stroke: #ccc;
}

.tiny {
    width: 6px;
    height: 4px;
    margin-right: -6px;
}

.address {
    flex: 1;
    display: flex;
    align-items: center;
    height: 22px;
    border: 1px solid #d9d9d9;
    padding-left: 2px;
}

.crumb {
    width: 4px;
    height: 7px;
    margin: 0 10px 0 7px;
}

.drop {
    width: 8px;
    height: 5px;
    margin-left: auto;
    margin-right: 3px;
}

.refresh {
    width: 17px;
    height: 20px;
    border-left: 1px solid #d9d9d9;
}

.refresh svg {
    display: block;
    width: 12px;
    height: 12px;
    margin: auto;
}

.search {
    width: 202px;
    margin-left: 12px;
    display: flex;
    align-items: center;
    border: 1px solid #d9d9d9;
    padding: 0 7px 0 5px;
    color: #555;
}

.search input {
    flex: 1;
    border: none;
    padding: 0;
}

.search input::placeholder {
    color: #6d6d6d;
}

.search svg {
    width: 12px;
    height: 12px;
}

.explorer-body {
    flex: 1;
    min-height: 0;
    display: flex;
    padding-top: 7px;
}

.tree {
    width: 164px;
    border-right: 1px solid #f0f0f0;
    padding: 16px 2px 0 0;
}

.tree ul {
    margin-bottom: 8px;
}

.tree li {
    display: flex;
    align-items: center;
    gap: 5px;
    height: 24px;
    padding-left: 24px;
    white-space: nowrap;
}

.tree .sub {
    padding-left: 32px;
}

.tree svg {
    width: 16px;
    height: 16px;
}

.tree .pin {
    width: 11px;
    height: 11px;
    margin-left: auto;
    margin-right: 3px;
}

.tree .selected {
    background-color: #d9d9d9;
}

.files {
    flex: 1;
    padding: 6px 0 0 1px;
}

.group {
    display: flex;
    align-items: center;
    gap: 5px;
    height: 27px;
    padding: 0 8px 2px 6px;
    font-size: 14px;
    color: #1e3287;
}

.group::after {
    content: "";
    flex: 1;
    height: 1px;
    margin-left: 2px;
    background-color: #dedede;
}

.group.hover {
    background-color: #e5f1fb;
}

.group.hover::after {
    background-color: #c8d8ea;
}

.tiles {
    display: grid;
    grid-template-columns: repeat(auto-fill, 250px);
    gap: 4px;
    padding: 2px 0 2px 14px;
}

.tiles.drives {
    padding-top: 1px;
    padding-bottom: 3px;
}

.tile {
    display: flex;
    gap: 3px;
    height: 52px;
    padding: 2px 6px;
}

.tile > svg {
    width: 48px;
    height: 48px;
}

.tile.folder p {
    padding-top: 6px;
}

.tile.selected {
    background-color: #d9d9d9;
}

.cyan {
    color: #14b5f0;
}

.info {
    flex: 1;
}

.usage {
    width: 188px;
    height: 13px;
    margin: 1px 0;
    border: 1px solid #bcbcbc;
    background-color: #e6e6e6;
}

.usage div {
    height: 100%;
    background-color: #26a0da;
}

.free {
    color: #6d6d6d;
}

.status {
    display: flex;
    align-items: center;
    gap: 22px;
    height: 24px;
    padding: 1px 8px 0 14px;
    color: #1e395b;
}

.views {
    margin-left: auto;
    display: flex;
    gap: 6px;
}

.details {
    width: 18px;
    height: 13px;
}

.large {
    width: 14px;
    height: 12px;
}

/* Floating windows */

.window {
    position: absolute;
    border: 1px solid #a0a0a0;
    background-color: #fff;
    box-shadow: 0 2px 10px rgba(0, 0, 0, 0.35);
}

.titlebar {
    display: flex;
    align-items: center;
    height: 25px;
    padding: 0 0 2px 3px;
    color: #999;
}

.titlebar h2 {
    flex: 1;
}

.dialog {
    background-color: #f0f0f0;
    font-family: "DejaVu Sans Condensed", "DejaVu Sans", sans-serif;
    font-size: 11px;
    line-height: 13px;
}

.dialog fieldset {
    margin: 0;
    padding: 0 6px;
    border: 1px solid #dcdcdc;
    min-width: 0;
}

.dialog legend {
    padding: 0 2px;
}

.dialog button {
    height: 21px;
    border: 1px solid #adadad;
    background-color: #e1e1e1;
}

.dialog button:disabled {
    border-color: #bfbfbf;
    background-color: #ccc;
    color: #838383;
}

.dialog label {
    display: flex;
    align-items: center;
    gap: 2px;
}

input[type="radio"] {
    appearance: none;
    flex: none;
    width: 13px;
    height: 13px;
    margin: 0;
    border: 1px solid #333;
    border-radius: 50%;
    background-color: #fff;
}

input[type="radio"]:checked {
    background-image: radial-gradient(circle, #222 3px, transparent 4px);
}

.h2testw {
    left: 751px;
    top: 390px;
    width: 419px;
}

.h2testw h2 {
    padding-left: 5px;
}

.h2testw .dialog {
    padding: 12px 10px 13px;
}

.language {
    display: flex;
    gap: 18px;
    margin-left: 1px;
}

.language span {
    margin-left: auto;
    margin-right: 1px;
}

.target {
    height: 69px;
}

.h2testw .target {
    margin-top: 12px;
}

.h2testw fieldset p,
.target-row span {
    padding-left: 6px;
}

.target-row {
    display: flex;
    justify-content: space-between;
    padding-right: 9px;
    line-height: 21px;
}

.target-row button {
    width: 97px;
    line-height: 19px;
}

.target p {
    padding-top: 12px;
}

.h2testw .volume {
    height: 66px;
    margin-top: 6px;
    padding-left: 13px;
}

.volume legend {
    margin-left: -7px;
}

.volume > label {
    margin: 6px 0 4px;
}

.only {
    display: flex;
    align-items: center;
    gap: 3px;
}

.only input[type="text"] {
    width: 60px;
    height: 23px;
    margin-left: 2px;
    border: 1px solid #777;
}

.actions {
    display: flex;
    gap: 17px;
    margin-top: 20px;
}

.actions button {
    width: 120px;
}

.progress {
    left: 1448px;
    top: 249px;
    width: 389px;
}

.progress .dialog {
    padding: 11px 10px 13px 11px;
    display: flex;
    flex-direction: column;
}

.results {
    display: flex;
    gap: 7px;
}

.results fieldset {
    flex: 1;
    height: 73px;
    line-height: 16px;
}

.results legend {
    line-height: 13px;
    padding-bottom: 6px;
}

.log {
    display: grid;
    grid-template-columns: 1fr 18px;
    grid-template-rows: 108px 17px;
    margin-top: 4px;
    border: 1px solid #777;
    color: #000;
}

.log-text {
    padding: 3px 4px;
    border-right: 1px solid #fff;
    border-bottom: 1px solid #fff;
}

.log-v,
.log-h {
    display: flex;
    align-items: center;
    justify-content: space-between;
    padding: 6px 5px;
    color: #aaa;
}

.log-v {
    flex-direction: column;
}

.log-v svg {
    width: 8px;
    height: 6px;
}

.log-h svg {
    width: 6px;
    height: 9px;
    fill: none;
    stroke: #aaa;
    stroke-width: 1.5;
}

.bar {
    height: 23px;
    margin: 8px 0 13px;
    border: 1px solid #bcbcbc;
    background-color: #06b025;
}

.progress .dialog button {
    width: 73px;
    margin-right: 1px;
    align-self: flex-end;
}

/* Task manager */

.taskmgr {
    left: 1013px;
    top: 484px;
    width: 697px;
    color: #000;
}

.taskmgr .titlebar {
    height: 31px;
    padding-left: 8px;
}

.tm-icon {
    width: 17px;
    height: 16px;
    margin-right: 4px;
}

.menu {
    display: flex;
    gap: 15px;
    height: 19px;
    padding-left: 7px;
    border-bottom: 1px solid #eee;
    color: #6d6d6d;
}

.tabs {
    display: flex;
    align-items: flex-end;
    height: 26px;
    padding-left: 2px;
    border-bottom: 1px solid #d9d9d9;
}

.tabs button {
    height: 20px;
    padding: 0 6px 2px;
    margin-left: -1px;
    border: 1px solid #d9d9d9;
    border-bottom: none;
    background-color: #f0f0f0;
}

.tabs .active {
    height: 23px;
    margin-bottom: -1px;
    padding-bottom: 4px;
    background-color: #fff;
}

.perf {
    display: flex;
    height: 442px;
    padding-top: 11px;
}

.devices {
    width: 187px;
    margin-left: 4px;
    overflow: hidden;
}

.devices li {
    display: flex;
    gap: 10px;
    height: 60px;
    padding: 10px;
    line-height: 15px;
}

.devices .disk {
    height: 66px;
}

.devices .selected {
    background-color: #d9d9d9;
}

.devices h3 {
    margin-top: -3px;
    font-size: 15px;
    line-height: 19px;
}

.devices p {
    white-space: nowrap;
}

.thumb {
    width: 60px;
    height: 100%;
    border: 1px solid #4ca32a;
    background-color: #fff;
}

.disk .thumb {
    height: 46px;
}

.cpu {
    border-color: #117dbb;
    fill: none;
    stroke: #117dbb;
}

.mem {
    border-color: #8b12ae;
    fill: #f4f0f6;
    stroke: #8b12ae;
}

.eth {
    border-color: #a74f01;
    stroke: #a74f01;
}

.scroll {
    width: 16px;
    margin-left: 4px;
    display: flex;
    flex-direction: column;
    align-items: center;
    background-color: #f0f0f0;
}

.scroll svg {
    width: 8px;
    height: 17px;
    color: #444;
}

.scroll-thumb {
    width: 16px;
    height: 330px;
    margin-bottom: auto;
    background-color: #cdcdcd;
}

.detail {
    flex: 1;
    padding: 5px 24px 0 27px;
}

.detail-head {
    display: flex;
    align-items: baseline;
    justify-content: space-between;
    height: 40px;
    font-size: 15px;
}

.detail-head h2 {
    font-size: 26px;
    line-height: 38px;
}

.caption {
    display: flex;
    justify-content: space-between;
    height: 17px;
    color: #707070;
}

.caption.second {
    height: 18px;
    padding-top: 2px;
    margin-bottom: 1px;
}

.chart {
    height: 68px;
    border: 1px solid #4ca32a;
    background-image: linear-gradient(90deg, #dce8d4 1px, transparent 1px), linear-gradient(#dce8d4 1px, transparent 1px);
    background-size: calc(100% / 15) 100%, 100% 10%;
    background-position: 7px 0, 0 -1px;
}

.chart.tall {
    height: 126px;
}

.stats {
    display: flex;
    padding-top: 6px;
}

.numbers {
    width: 214px;
    display: grid;
    grid-template-columns: 91px 1fr;
    row-gap: 10px;
    color: #707070;
    white-space: nowrap;
}

.numbers strong {
    display: block;
    font-weight: normal;
    font-size: 19px;
    line-height: 24px;
    margin-top: 2px;
    color: #000;
}

.numbers .read {
    padding-left: 5px;
    border-left: 3px solid #4ca32a;
}

.numbers .write {
    margin-left: 3px;
    padding-left: 5px;
    border-left: 3px dotted #86c440;
}

.stats table {
    border-collapse: collapse;
    align-self: flex-start;
}

.stats th,
.stats td {
    height: 18px;
    padding: 0 0 2px;
    font-weight: normal;
    text-align: left;
}

.stats th {
    width: 119px;
    color: #707070;
}

.tm-footer {
    display: flex;
    align-items: center;
    gap: 7px;
    height: 60px;
    padding: 0 8px 14px;
}

.tm-footer button {
    display: flex;
    align-items: center;
    gap: 6px;
}

.less {
    width: 20px;
    height: 20px;
}

.tm-footer .sep {
    margin-left: 2px;
    background-color: #ccc;
}

.tm-footer a {
    margin-left: -1px;
    color: #0066cc;
    text-decoration: none;
}

/* Taskbar */

.taskbar {
    position: relative;
    display: flex;
    height: 40px;
    background: linear-gradient(90deg, #404143 392px, #1f1e24 620px, #1f1d24 900px, #29292b 1400px, #1c1a22 1800px);
    color: #fff;
}

.start {
    width: 48px;
    background-color: #1d1c22;
}

.start svg {
    display: block;
    margin: auto;
}

.task-search {
    width: 344px;
    display: flex;
    align-items: center;
    gap: 12px;
    padding: 0 11px;
    border: 1px solid #b8b8b8;
    background-color: #f2f2f2;
    color: #222;
}

.task-search svg {
    width: 16px;
    height: 16px;
}

.task-search input {
    flex: 1;
    border: none;
    padding: 0;
    background: none;
    font-size: 14px;
}

.task-search input::placeholder {
    color: #444;
}

.apps {
    display: flex;
    gap: 9px;
    padding-left: 7px;
}

.apps button {
    position: relative;
    width: 40px;
    display: flex;
    align-items: center;
    justify-content: center;
    border-bottom: 2px solid transparent;
}

.apps .open {
    border-bottom-color: #76b9ed;
}

.apps svg {
    width: 24px;
    height: 24px;
}

.badge {
    position: absolute;
    right: -2px;
    bottom: 2px;
    width: 20px;
    height: 18px;
    border: 1px solid #888;
    border-radius: 9px;
    background-color: #1f1d24;
    font-size: 10px;
    font-weight: bold;
}

.tray {
    margin-left: auto;
    display: flex;
    align-items: center;
    gap: 8px;
}

.tray-up {
    width: 12px;
    height: 8px;
}

.clock {
    width: 58px;
    text-align: center;
    line-height: 18px;
    margin: 0 8px 0 0;
}

.show-desktop {
    width: 5px;
    height: 40px;
    margin-left: 12px;
    border-left: 1px solid #666;
}
```
